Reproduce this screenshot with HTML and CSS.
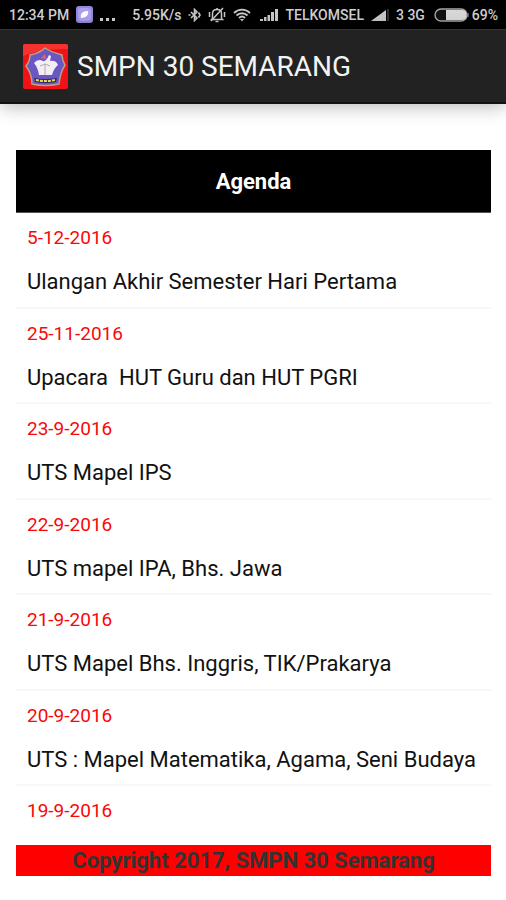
FILE: index.html
```html
<!DOCTYPE html>
<html lang="id">
<head>
<meta charset="UTF-8">
<meta name="viewport" content="width=device-width, initial-scale=1.0">
<title>SMPN 30 SEMARANG</title>
<link rel="stylesheet" href="styles.css">
</head>
<body>

<div class="status-bar">
    <span>12:34 PM</span>
    <svg class="app-icon" width="17" height="17" viewBox="0 0 17 17">
        <rect width="17" height="17" rx="3" fill="#9388dc"/>
        <rect x="2" y="2" width="13" height="13" rx="3" fill="#ab9ff0"/>
        <path d="M5 12C4 8 6 5 12 5C13 9 10 12 5 12Z" fill="#fff"/>
    </svg>
    <svg class="dots" width="16" height="4" viewBox="0 0 16 4" fill="#d0d0d0">
        <rect x="0" y="0" width="3" height="3"/>
        <rect x="6" y="0" width="3" height="3"/>
        <rect x="12" y="0" width="3" height="3"/>
    </svg>
    <span class="speed">5.95K/s</span>
    <svg class="bluetooth" width="13" height="14" viewBox="0 0 13 14" fill="none" stroke="#c8c8c8" stroke-width="1.6">
        <path d="M3 4L9 10L6.500 12.500V1.500L9 4L3 10"/>
        <path d="M0.500 7H2.500M10.500 4.500L12 7L10.500 9.500"/>
    </svg>
    <svg class="muted" width="18" height="16" viewBox="0 0 18 16" fill="none" stroke="#c8c8c8" stroke-width="1.500">
        <path d="M4.500 11.500V6.500C4.500 4 6.500 2.500 9 2.500S13.500 4 13.500 6.500V11.500L14.500 12.500H3.500Z"/>
        <path d="M7.500 14.500H10.500M3 14L15 1M1.500 5V10M16.500 5V10M9 1V3"/>
    </svg>
    <svg class="wifi" width="18" height="14" viewBox="0 0 18 14" fill="none" stroke="#c8c8c8" stroke-width="1.800">
        <path d="M1 5C5.500 0.500 12.500 0.500 17 5M3.500 7.500C6.500 4.500 11.500 4.500 14.500 7.500M6 10C8 8 10 8 12 10"/>
        <path d="M7 11L9 13.500L11 11Z" fill="#c8c8c8" stroke="none"/>
    </svg>
    <svg class="signal" width="18" height="13" viewBox="0 0 18 13" fill="#c8c8c8">
        <path d="M0 11H3V13H0ZM4 9H6.500V13H4ZM7.500 7H10V13H7.500ZM11 4H14V13H11ZM15 1H18V13H15Z"/>
    </svg>
    <span class="carrier">TELKOMSEL</span>
    <svg class="signal-alt" width="18" height="13" viewBox="0 0 18 13">
        <path d="M0 13L15 2V13Z" fill="#c8c8c8"/>
        <path d="M16 1H18V13H16Z" fill="#303030"/>
    </svg>
    <span class="network">3 3G</span>
    <div class="power">
        <svg class="battery" width="35" height="14" viewBox="0 0 35 14">
            <rect x="1" y="1" width="32" height="12" rx="6" fill="#111" stroke="#a8a8a8" stroke-width="1.400"/>
            <path d="M12 2H28Q32.500 2 32.500 7T28 12H12Z" fill="#d8d8d8"/>
            <path d="M34 5V9" stroke="#a8a8a8"/>
        </svg>
        <span class="percent">69%</span>
    </div>
</div>

<header class="app-bar">
    <svg class="logo" width="45" height="45" viewBox="0 0 45 45">
        <rect width="45" height="45" rx="2" fill="#f01216"/>
        <path d="M0 2Q0 0 2 0H43Q45 0 45 2V5Q20 4 0 12Z" fill="#f4322f"/>
        <path d="M22 4Q28 8 39 11Q39 16 42 21Q37 29 36 40Q22 43 9 40Q9 30 3 22Q7 17 7 11Q17 9 22 4Z" fill="#6b57c4" stroke="#b9a183" stroke-width="1.500"/>
        <path d="M11 19Q15 14 20 17Q23 18 26 11L28 12L27 17Q33 16 35 21Q31 24 29 31H16Q15 24 11 19Z" fill="#f3eef4"/>
        <path d="M17 22L22 20L27 22M22 20V31" stroke="#b6a7b5" fill="none"/>
        <path d="M18 14L22 10L23 15Z" fill="#e3655d"/>
        <path d="M11 34Q22 36 34 34L33 38Q22 40 12 38Z" fill="#33286e"/>
        <path d="M13 36Q22 38 32 36" stroke="#e5d95a" stroke-width="2" stroke-dasharray="3 1" fill="none"/>
    </svg>
    <h1>SMPN 30 SEMARANG</h1>
</header>

<main class="content">
    <h2 class="agenda-title">Agenda</h2>
    <ul class="agenda-list">
        <li>
            <span class="date">5-12-2016</span>
            <span class="event">Ulangan Akhir Semester Hari Pertama</span>
        </li>
        <li>
            <span class="date">25-11-2016</span>
            <span class="event">Upacara&nbsp; HUT Guru dan HUT PGRI</span>
        </li>
        <li>
            <span class="date">23-9-2016</span>
            <span class="event">UTS Mapel IPS</span>
        </li>
        <li>
            <span class="date">22-9-2016</span>
            <span class="event">UTS mapel IPA, Bhs. Jawa</span>
        </li>
        <li>
            <span class="date">21-9-2016</span>
            <span class="event">UTS Mapel Bhs. Inggris, TIK/Prakarya</span>
        </li>
        <li>
            <span class="date">20-9-2016</span>
            <span class="event">UTS : Mapel Matematika, Agama, Seni Budaya</span>
        </li>
        <li>
            <span class="date">19-9-2016</span>
        </li>
    </ul>
    <footer class="copyright">Copyright 2017, SMPN 30 Semarang</footer>
</main>

</body>
</html>
```
FILE: styles.css
```css
* {
    box-sizing: border-box;
}
body {
    margin: 0;
    min-height: 100vh;
    display: flex;
    flex-direction: column;
    font-family: Roboto, sans-serif;
    background-color: #fff;
}
.status-bar {
    height: 29px;
    padding: 0 8px 0 9px;
    display: flex;
    align-items: center;
    gap: 7px;
    background-color: #000;
    color: #d0d0d0;
    font-size: 14px;
    font-weight: 500;
    white-space: nowrap;
}
.status-bar svg {
    flex: none;
}
.dots {
    align-self: flex-end;
    margin-bottom: 7px;
}
.speed {
    margin-left: 9px;
}
.signal {
    margin-left: 2px;
}
.power {
    display: flex;
    align-items: center;
    gap: 3px;
    margin-left: auto;
}
.app-bar {
    height: 75px;
    padding: 0 23px;
    display: flex;
    align-items: center;
    gap: 9px;
    background-color: #222;
    border-top: 1px solid #333;
    border-bottom: 2px solid #111;
    box-shadow: 0 2px 18px rgba(0, 0, 0, 0.3);
}
.app-bar h1 {
    margin: 0;
    line-height: 32px;
    padding-top: 2px;
    font-size: 28px;
    font-weight: 400;
    color: #f3f3f3;
}
.content {
    flex: 1;
    display: flex;
    flex-direction: column;
    padding: 46px 15px 24px 16px;
}
.agenda-title {
    margin: 0;
    padding: 17px 16px 15px;
    line-height: 30px;
    text-align: center;
    font-size: 22px;
    font-weight: 700;
    background-color: #000;
    color: #fff;
    border-bottom: 1px solid #555;
}
.agenda-list {
    flex: 1;
    display: flex;
    flex-direction: column;
    margin: 0;
    padding: 0;
    list-style: none;
}
.agenda-list li {
    flex: 1 0 auto;
    padding: 12px 11px 9px;
    border-bottom: 2px solid #f8f8f8;
}
.agenda-list li:last-child {
    flex: none;
    padding-bottom: 21px;
    border-bottom: none;
}
.date {
    display: block;
    line-height: 26px;
    font-size: 19px;
    color: #f80808;
}
.event {
    display: block;
    margin-top: 16px;
    line-height: 30px;
    font-size: 22px;
    color: #111;
}
.copyright {
    line-height: 31px;
    text-align: center;
    font-size: 22px;
    font-weight: 700;
    background-color: #f00;
    color: #333;
}
```
